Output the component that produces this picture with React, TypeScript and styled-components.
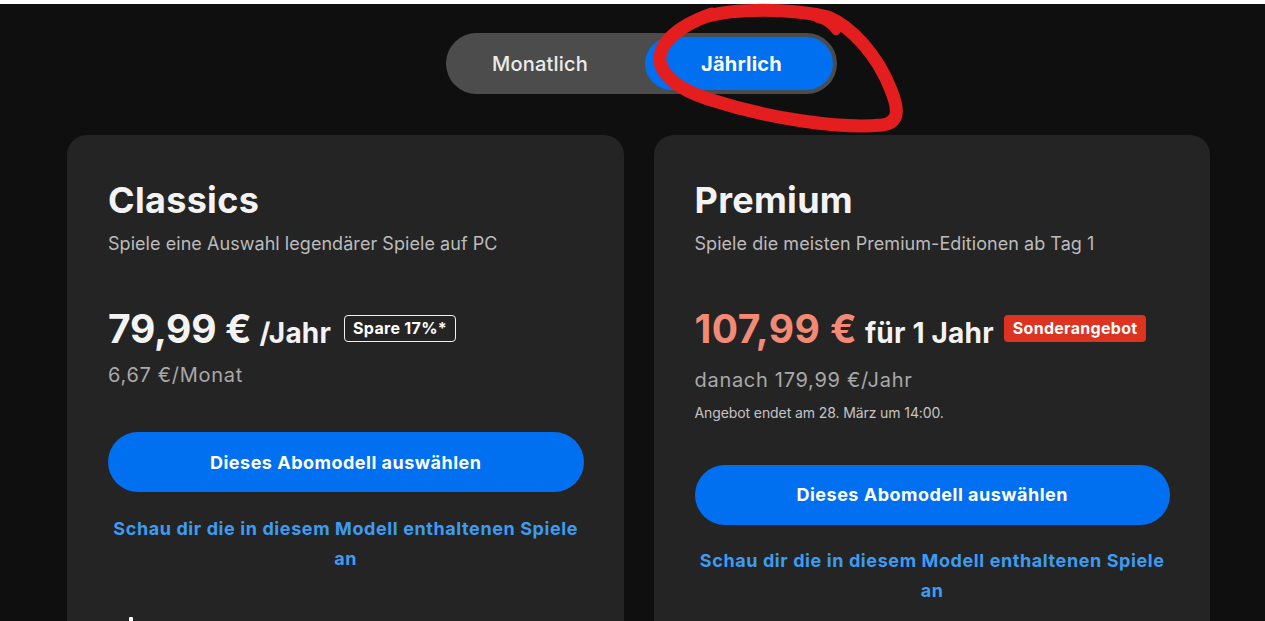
import React from "react";
import styled, { createGlobalStyle } from "styled-components";

const Global = createGlobalStyle`
  html, body { margin: 0; padding: 0; background: #0f0f0f; }
  body { font-family: Inter, "Noto Sans", "DejaVu Sans", sans-serif; overflow: hidden; }
  * { box-sizing: border-box; }
`;

const Page = styled.div`
  position: relative;
  width: 1265px;
  height: 621px;
  overflow: hidden;
  background: #0f0f0f;
  display: flex;
  flex-direction: column;
`;

const TopStrip = styled.div`
  height: 4px;
  background: #ffffff;
  flex: none;
`;

const Main = styled.main`
  padding: 29px 55px 0 67px;
  display: flex;
  flex-direction: column;
  align-items: center;
`;

const Toggle = styled.div`
  display: flex;
  align-items: center;
  width: 391px;
  height: 61px;
  padding: 4px;
  margin-left: 5px;
  border-radius: 31px;
  background: #4c4c4c;
`;

const ToggleOption = styled.div<{ $active?: boolean; $w: number; $shift?: number }>`
  width: ${(p) => p.$w}px;
  height: 53px;
  border-radius: 27px;
  display: flex;
  align-items: center;
  justify-content: center;
  padding-right: ${(p) => p.$shift ?? 0}px;
  padding-left: ${(p) => (p.$active ? 6 : 0)}px;
  background: ${(p) => (p.$active ? "#006ff0" : "transparent")};
  color: ${(p) => (p.$active ? "#ffffff" : "#ececec")};
  font-size: 20px;
  font-weight: ${(p) => (p.$active ? 700 : 500)};
  letter-spacing: 0.2px;
`;

const Cards = styled.div`
  align-self: stretch;
  display: grid;
  grid-template-columns: 1fr 1fr;
  gap: 30px;
  margin-top: 41px;
`;

const Card = styled.section`
  background: #242424;
  border-radius: 20px;
  padding: 43px 40px 40px 41px;
  height: 560px;
  display: flex;
  flex-direction: column;
`;

const Title = styled.h2`
  margin: 0;
  font-size: 36px;
  line-height: 44px;
  font-weight: 700;
  color: #f3f3f3;
  letter-spacing: 0.3px;
`;

const Subtitle = styled.p`
  margin: 10px 0 0;
  font-size: 18px;
  line-height: 24px;
  color: #bcbcbc;
  letter-spacing: 0.05px;
`;

const PriceRow = styled.div`
  display: flex;
  align-items: baseline;
  margin-top: 49px;
  height: 48px;
`;

const Price = styled.span<{ $offer?: boolean }>`
  font-size: 39px;
  line-height: 48px;
  font-weight: 700;
  color: ${(p) => (p.$offer ? "#f28a75" : "#f3f3f3")};
  letter-spacing: ${(p) => (p.$offer ? 0.4 : -0.3)}px;
`;

const Period = styled.span`
  font-size: 28px;
  font-weight: 700;
  color: #f3f3f3;
  margin-left: 8px;
  letter-spacing: 0.2px;
`;

const Badge = styled.span<{ $variant: "outline" | "red" }>`
  align-self: flex-start;
  margin-top: 9.5px;
  margin-left: ${(p) => (p.$variant === "red" ? 10 : 13)}px;
  height: 27px;
  padding: 0 ${(p) => (p.$variant === "red" ? 9 : 8)}px;
  display: inline-flex;
  align-items: center;
  border-radius: 4px;
  font-size: 16px;
  font-weight: 700;
  letter-spacing: 0.3px;
  color: #ffffff;
  background: ${(p) => (p.$variant === "red" ? "#dc3420" : "transparent")};
  border: ${(p) => (p.$variant === "red" ? "none" : "1px solid #f0f0f0")};
`;

const SubPrice = styled.p<{ $gap: number }>`
  margin: ${(p) => p.$gap}px 0 0;
  font-size: 20px;
  line-height: 28px;
  color: #a9a9a9;
  letter-spacing: 0.7px;
`;

const Note = styled.p`
  margin: 9px 0 0;
  font-size: 14px;
  line-height: 20px;
  color: #c4c4c4;
  letter-spacing: -0.1px;
`;

const SelectButton = styled.button<{ $gap: number }>`
  margin-top: ${(p) => p.$gap}px;
  height: 60px;
  width: 100%;
  border: none;
  border-radius: 30px;
  background: #006ff0;
  color: #ffffff;
  font-family: inherit;
  font-size: 18px;
  font-weight: 700;
  letter-spacing: 0.5px;
  cursor: pointer;
`;

const GamesLink = styled.a`
  display: block;
  margin-top: 21.5px;
  padding: 0 4px;
  text-align: center;
  font-size: 18px;
  line-height: 30px;
  font-weight: 700;
  color: #3d9cf2;
  text-decoration: none;
  letter-spacing: 0.6px;
`;

const FeatureList = styled.ul`
  list-style: none;
  margin: 43px 0 0;
  padding: 0;
`;

const FeatureItem = styled.li`
  display: flex;
  gap: 12px;
  color: #f3f3f3;
  font-size: 16px;
  padding-left: 21px;
`;

const Dot = styled.span`
  width: 4px;
  height: 10px;
  border-radius: 1px;
  background: #ffffff;
`;

const Annotation = styled.svg`
  position: absolute;
  left: 0;
  top: 0;
  pointer-events: none;
`;

export default function App() {
  return (
    <Page>
      <Global />
      <TopStrip />
      <Main>
        <Toggle>
          <ToggleOption $w={195} $shift={14}>Monatlich</ToggleOption>
          <ToggleOption $w={188} $active>Jährlich</ToggleOption>
        </Toggle>
        <Cards>
          <Card>
            <Title>Classics</Title>
            <Subtitle>Spiele eine Auswahl legendärer Spiele auf PC</Subtitle>
            <PriceRow>
              <Price>79,99 €</Price>
              <Period>/Jahr</Period>
              <Badge $variant="outline">Spare 17%*</Badge>
            </PriceRow>
            <SubPrice $gap={8}>6,67 €/Monat</SubPrice>
            <SelectButton $gap={43}>Dieses Abomodell auswählen</SelectButton>
            <GamesLink href="#">Schau dir die in diesem Modell enthaltenen Spiele an</GamesLink>
            <FeatureList>
              <FeatureItem>
                <Dot />
              </FeatureItem>
            </FeatureList>
          </Card>
          <Card>
            <Title>Premium</Title>
            <Subtitle>Spiele die meisten Premium-Editionen ab Tag 1</Subtitle>
            <PriceRow>
              <Price $offer>107,99 €</Price>
              <Period>für 1 Jahr</Period>
              <Badge $variant="red">Sonderangebot</Badge>
            </PriceRow>
            <SubPrice $gap={13}>danach 179,99 €/Jahr</SubPrice>
            <Note>Angebot endet am 28. März um 14:00.</Note>
            <SelectButton $gap={41.5}>Dieses Abomodell auswählen</SelectButton>
            <GamesLink href="#">Schau dir die in diesem Modell enthaltenen Spiele an</GamesLink>
          </Card>
        </Cards>
      </Main>
      <Annotation width="1265" height="150" viewBox="0 0 1265 150">
        <path
          d="M 704 17 C 735 8, 790 8, 828 17 C 852 27, 878 56, 891 90 C 900 112, 898 123, 882 125 C 840 129, 770 119, 708 99 C 684 91, 664 80, 660 62 C 658 45, 675 27, 712 14"
          fill="none"
          stroke="#e41e1e"
          strokeWidth={13}
          strokeLinecap="round"
          strokeLinejoin="round"
        />
        <path d="M 818 18 C 826 20, 832 24, 836 30" fill="none" stroke="#e41e1e" strokeWidth={10} strokeLinecap="round" />
      </Annotation>
    </Page>
  );
}
